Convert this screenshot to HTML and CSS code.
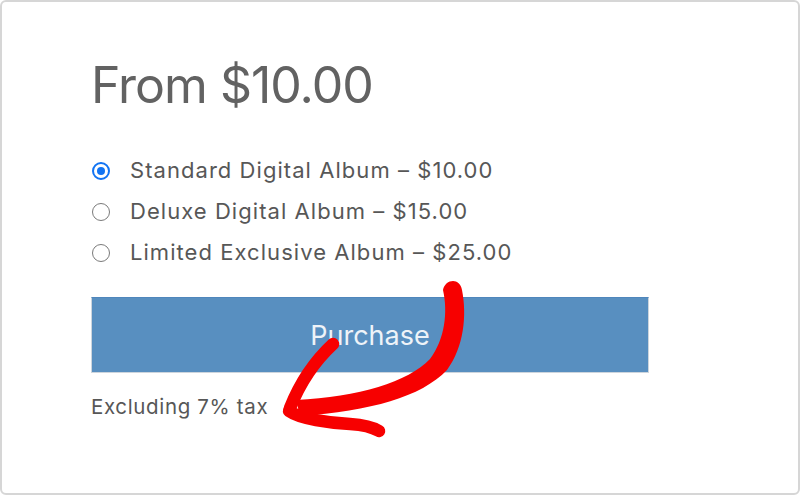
FILE: index.html
```html
<!DOCTYPE html>
<html lang="en">
<head>
<meta charset="utf-8">
<title>Album purchase</title>
<link rel="stylesheet" href="styles.css">
</head>
<body>
<div class="card">
  <h1 class="price">From $10.00</h1>
  <ul class="options">
    <li class="option"><span class="radio radio--checked"></span><span class="label">Standard Digital Album – $10.00</span></li>
    <li class="option"><span class="radio"></span><span class="label">Deluxe Digital Album – $15.00</span></li>
    <li class="option"><span class="radio"></span><span class="label">Limited Exclusive Album – $25.00</span></li>
  </ul>
  <button class="purchase" type="button">Purchase</button>
  <p class="tax">Excluding 7% tax</p>
  <svg class="arrow" width="800" height="495" viewBox="0 0 800 495" aria-hidden="true">
    <path class="arrow-fill" d="M443 290 C445 279 460 277 462 290 C467 315 464 347 447 370 C421 397 371 411 300 416 L296 400 C359 397 408 382 430 359 C445 339 448 312 443 290 Z"/>
    <path class="arrow-stroke" d="M333 344 Q305 370 290 408"/>
    <path class="arrow-stroke" d="M289 411 C300 419 330 423 350 424 C365 425 374 428 379 431"/>
  </svg>
</div>
</body>
</html>
```
FILE: styles.css
```css
html, body {
  margin: 0;
  padding: 0;
  background: #ffffff;
}

body {
  width: 800px;
  height: 495px;
  font-family: Inter, "Liberation Sans", sans-serif;
}

.card {
  position: relative;
  box-sizing: border-box;
  width: 800px;
  height: 495px;
  border: 2px solid #d6d6d6;
  border-radius: 6px;
  padding: 53px 0 0 89px;
  display: flex;
  flex-direction: column;
  align-items: flex-start;
}

.price {
  margin: 0 0 35px;
  font-size: 50px;
  line-height: 60px;
  font-weight: 400;
  letter-spacing: -1px;
  color: #626262;
}

.options {
  list-style: none;
  margin: 0;
  padding: 0;
}

.option {
  display: flex;
  align-items: center;
  gap: 20px;
  height: 41px;
  padding-left: 1px;
  font-size: 22px;
  line-height: 41px;
  letter-spacing: 1.05px;
  color: #575757;
}

.radio {
  box-sizing: border-box;
  width: 18px;
  height: 18px;
  border-radius: 50%;
  border: 1.5px solid #7a7a7a;
  background: #ffffff;
  flex: none;
  display: flex;
  align-items: center;
  justify-content: center;
}

.radio--checked {
  border: 2.5px solid #1274f3;
}

.radio--checked::after {
  content: "";
  width: 8px;
  height: 8px;
  border-radius: 50%;
  background: #1274f3;
}

.purchase {
  box-sizing: border-box;
  margin-top: 24px;
  width: 558px;
  height: 76px;
  border: 1px solid #cdd5dd;
  border-top-color: #4f86bc;
  background: #588fc0;
  color: #eef3f8;
  font-family: Inter, "Liberation Sans", sans-serif;
  font-size: 27px;
  letter-spacing: 0;
  padding: 0;
  cursor: pointer;
}

.tax {
  margin: 22px 0 0 0;
  font-size: 20.5px;
  line-height: 24px;
  letter-spacing: 0.65px;
  color: #575757;
}

.arrow {
  position: absolute;
  left: -2px;
  top: -2px;
  pointer-events: none;
}

.arrow-fill {
  fill: #f70000;
}

.arrow-stroke {
  fill: none;
  stroke: #f70000;
  stroke-width: 12.5;
  stroke-linecap: round;
  stroke-linejoin: round;
}
```
